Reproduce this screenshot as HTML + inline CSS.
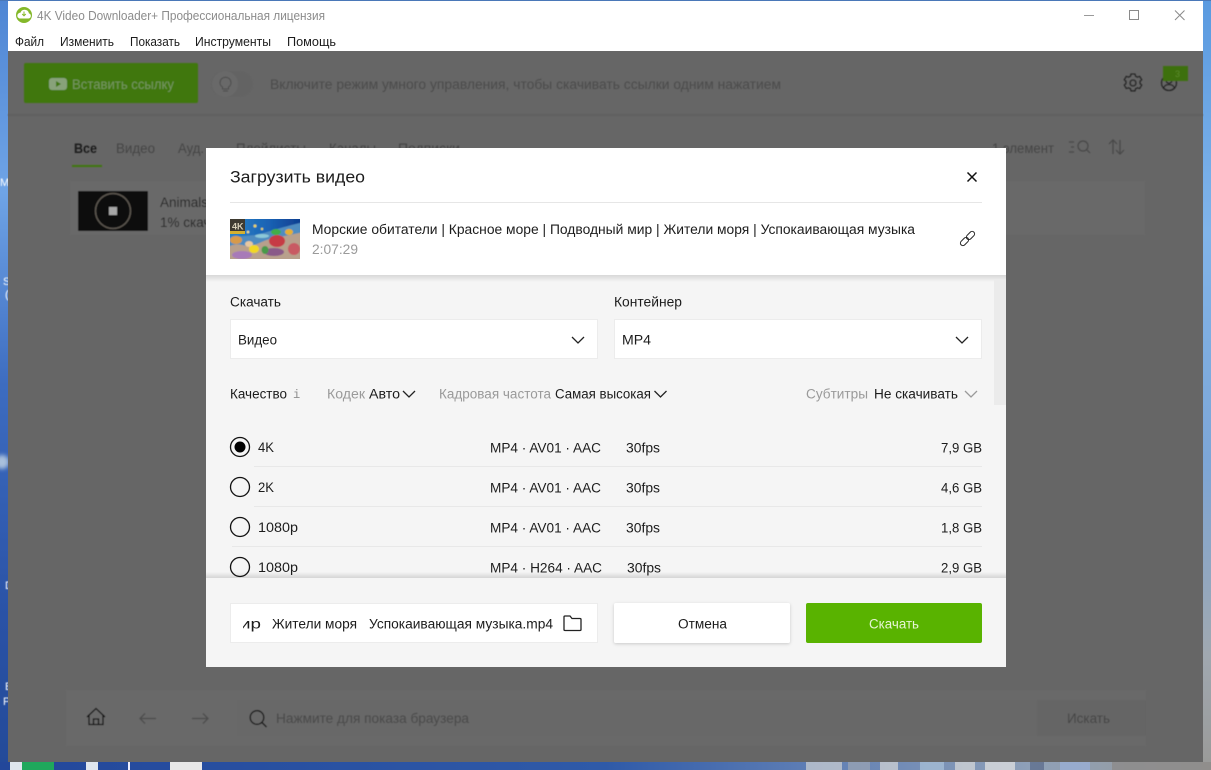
<!DOCTYPE html>
<html><head><meta charset="utf-8"><title>4K Video Downloader+</title>
<style>
html,body{margin:0;padding:0;width:1211px;height:770px;overflow:hidden;background:#666}
svg{display:block}
text{font-family:"Liberation Sans","Noto Sans CJK SC",sans-serif;font-size:13.5px;fill:#1c1c1c}
.s{font-size:12.5px}
.g{fill:#9a9a9a}
.d{fill:#454545}
</style></head><body>
<svg width="1211" height="770" viewBox="0 0 1211 770" xmlns="http://www.w3.org/2000/svg">
<defs>
<linearGradient id="lb" x1="0" y1="0" x2="0" y2="1"><stop offset="0" stop-color="#4f86d4"/><stop offset=".25" stop-color="#6fa4e6"/><stop offset=".5" stop-color="#3d6cc0"/><stop offset=".8" stop-color="#2a52a6"/><stop offset="1" stop-color="#234a98"/></linearGradient>
<linearGradient id="rb" x1="0" y1="0" x2="0" y2="1"><stop offset="0" stop-color="#5a9ae0"/><stop offset=".3" stop-color="#80b4ea"/><stop offset=".6" stop-color="#7da6d6"/><stop offset=".85" stop-color="#a0a8b0"/><stop offset="1" stop-color="#9a9a98"/></linearGradient>
<linearGradient id="bb" x1="0" y1="0" x2="1" y2="0"><stop offset="0" stop-color="#23479a"/><stop offset=".5" stop-color="#2f5aa8"/><stop offset=".66" stop-color="#5c7cb4"/><stop offset=".85" stop-color="#8ea0b8"/><stop offset="1" stop-color="#9a9a98"/></linearGradient>
<linearGradient id="sea" x1="0" y1="0" x2="1" y2="0"><stop offset="0" stop-color="#2a86c8"/><stop offset=".55" stop-color="#1a62b4"/><stop offset="1" stop-color="#0e3a8c"/></linearGradient>
<linearGradient id="sh1" x1="0" y1="0" x2="0" y2="1"><stop offset="0" stop-color="#000" stop-opacity=".12"/><stop offset="1" stop-color="#000" stop-opacity="0"/></linearGradient>
<linearGradient id="sh2" x1="0" y1="1" x2="0" y2="0"><stop offset="0" stop-color="#000" stop-opacity=".13"/><stop offset="1" stop-color="#000" stop-opacity="0"/></linearGradient>
<filter id="soft" x="-5%" y="-5%" width="110%" height="110%"><feGaussianBlur stdDeviation=".45"/></filter>
<filter id="blur2" x="-30%" y="-30%" width="160%" height="160%"><feGaussianBlur stdDeviation="2"/></filter>
<filter id="tb" x="-5%" y="-5%" width="110%" height="110%"><feGaussianBlur stdDeviation=".5"/></filter>
<filter id="bs" x="-10%" y="-20%" width="120%" height="140%"><feDropShadow dx="0" dy="1" stdDeviation="1.5" flood-color="#000" flood-opacity=".18"/></filter>
<clipPath id="thumb"><rect x="230" y="219" width="70" height="40"/></clipPath>
<clipPath id="fn"><rect x="243" y="610" width="320" height="26"/></clipPath>
</defs>

<!-- desktop -->
<rect width="1211" height="770" fill="#2f5aa8"/>
<rect x="0" y="0" width="8" height="770" fill="url(#lb)"/>
<rect x="1203" y="0" width="8" height="770" fill="url(#rb)"/>
<rect x="0" y="762" width="1211" height="8" fill="url(#bb)"/>
<rect x="0" y="0" width="1211" height="1" fill="#4a78b8"/>
<rect x="10" y="762" width="12" height="8" fill="#dfe6ee"/>
<rect x="22" y="762" width="32" height="8" fill="#1fa85c"/>
<rect x="86" y="762" width="12" height="8" fill="#dfe6ee"/>
<rect x="128" y="762" width="2" height="8" fill="#eef"/>
<rect x="170" y="762" width="32" height="8" fill="#e8e8e8"/>
<g opacity=".75">
<rect x="806" y="762" width="36" height="8" fill="#c8ccd0"/>
<rect x="848" y="762" width="22" height="8" fill="#9aa4b4"/>
<rect x="880" y="762" width="18" height="8" fill="#d0d2d4"/>
<rect x="920" y="762" width="24" height="8" fill="#a8c0d8"/>
<rect x="955" y="762" width="20" height="8" fill="#d4d6d8"/>
<rect x="985" y="762" width="30" height="8" fill="#e0e0e0"/>
<rect x="1030" y="762" width="14" height="8" fill="#5c6c8c"/>
<rect x="1060" y="762" width="30" height="8" fill="#9ab0d8"/>
<rect x="1112" y="762" width="99" height="8" fill="#8c8a88"/>
</g>
<g filter="url(#soft)">
<text x="0" y="186" style="fill:#fff;font-size:11px">M</text>
<text x="3" y="285" style="fill:#fff;font-size:11px">S</text>
<text x="5" y="298" style="fill:#fff;font-size:11px">(</text>
<text x="5" y="589" style="fill:#fff;font-size:11px">D</text>
<text x="5" y="690" style="fill:#fff;font-size:11px">E</text>
<text x="3" y="705" style="fill:#fff;font-size:11px">P</text>
</g>
<ellipse cx="2" cy="462" rx="7" ry="7" fill="#a8c0dc" filter="url(#blur2)"/>

<!-- window -->
<rect x="8" y="1" width="1195" height="50" fill="#fff"/>
<rect x="8" y="51" width="1195" height="711" fill="#666"/>

<!-- title bar -->
<circle cx="24" cy="15" r="8" fill="#84b82a"/>
<path d="M19.500 18.500h9a2.600 2.600 0 0 0 .4-5.100 4.400 4.400 0 0 0-8.500-.6 2.900 2.900 0 0 0-.9 5.700z" fill="#fff"/>
<path d="M24 11.500v4M22.200 14l1.800 1.800 1.800-1.800" stroke="#84b82a" stroke-width="1" fill="none"/>
<text x="37" y="20" class="s" style="fill:#8c8c8c" textLength="288" lengthAdjust="spacingAndGlyphs">4K Video Downloader+ Профессиональная лицензия</text>
<text x="15" y="46" class="s" textLength="29" lengthAdjust="spacingAndGlyphs">Файл</text>
<text x="60" y="46" class="s" textLength="54" lengthAdjust="spacingAndGlyphs">Изменить</text>
<text x="130" y="46" class="s" textLength="50" lengthAdjust="spacingAndGlyphs">Показать</text>
<text x="195" y="46" class="s" textLength="76" lengthAdjust="spacingAndGlyphs">Инструменты</text>
<text x="287" y="46" class="s" textLength="49" lengthAdjust="spacingAndGlyphs">Помощь</text>
<rect x="1084" y="15" width="10" height="1" fill="#9a9a9a"/>
<rect x="1129.500" y="10.500" width="9" height="9" fill="none" stroke="#8a8a8a"/>
<path d="M1175 10.500l9.500 9.500M1184.500 10.500l-9.500 9.500" stroke="#8a8a8a" stroke-width="1" fill="none"/>

<!-- dim app -->
<g filter="url(#soft)">
<rect x="8" y="114" width="1195" height="2" fill="#606060"/>
<rect x="24" y="63" width="174" height="40" rx="2" fill="#3f770c"/>
<rect x="49" y="78" width="18" height="12" rx="3" fill="#88a27a"/>
<path d="M56 81l5 3-5 3z" fill="#3f770c"/>
<text x="72" y="89" style="fill:#76965f" textLength="102" lengthAdjust="spacingAndGlyphs">Вставить ссылку</text>
<rect x="211" y="71" width="42" height="26" rx="13" fill="#636363"/>
<circle cx="225" cy="84" r="13" fill="#696969"/>
<path d="M222.500 89v-2c-1.500-1-2.500-2.500-2.500-4.300a5.500 5.500 0 0 1 11 0c0 1.800-1 3.300-2.500 4.300v2zM223 91h5" fill="none" stroke="#4c4c4c"/>
<text x="270" y="89" style="fill:#4b4b4b" textLength="511" lengthAdjust="spacingAndGlyphs">Включите режим умного управления, чтобы скачивать ссылки одним нажатием</text>

<!-- top right -->
<g fill="none" stroke="#1e1e1e" stroke-width="1.100">
<circle cx="1133" cy="83" r="3"/>
<path d="M1131 75.500h4l.6 2.200 1.900.9 2.200-.7 2 3.400-1.700 1.600v2.100l1.700 1.600-2 3.400-2.200-.7-1.900.9-.6 2.200h-4l-.6-2.200-1.900-.9-2.200.7-2-3.400 1.700-1.600v-2.100l-1.700-1.600 2-3.400 2.200.7 1.900-.9z" transform="translate(0 -1.500)"/>
<circle cx="1169" cy="83" r="7.500"/>
<circle cx="1169" cy="80.500" r="2.800"/>
<path d="M1163.500 88c1-2.500 3-3.500 5.500-3.500s4.500 1 5.500 3.500"/>
</g>
<rect x="1163" y="66" width="25" height="15" fill="#3c6f0a"/>
<text x="1175" y="77" style="fill:#5a8a2c;font-size:9px">3</text>

<!-- tabs -->
<text x="74" y="153" style="fill:#1a1a1a;font-weight:bold" textLength="23" lengthAdjust="spacingAndGlyphs">Все</text>
<rect x="72" y="165" width="30" height="2" fill="#3f770c"/>
<text x="116" y="153" class="d" textLength="39" lengthAdjust="spacingAndGlyphs">Видео</text>
<text x="178" y="153" class="d" textLength="26" lengthAdjust="spacingAndGlyphs">Ауд.</text>
<text x="236" y="153" class="d" textLength="70" lengthAdjust="spacingAndGlyphs">Плейлисты</text>
<text x="329" y="153" class="d" textLength="47" lengthAdjust="spacingAndGlyphs">Каналы</text>
<text x="398" y="153" class="d" textLength="62" lengthAdjust="spacingAndGlyphs">Подписки</text>
<text x="992" y="153" class="d" textLength="62" lengthAdjust="spacingAndGlyphs">1 элемент</text>
<g fill="none" stroke="#474747" stroke-width="1.200">
<path d="M1069 142h5M1071 147h3M1069 152h5"/>
<circle cx="1083" cy="146" r="5"/><path d="M1086.500 149.500l3.500 3.500"/>
<path d="M1113 154v-14M1109 144l4-4 4 4M1120 140v14M1116 150l4 4 4-4"/>
</g>

<!-- list item -->
<rect x="70" y="181" width="1075" height="54" fill="#696969"/>
<rect x="78" y="191" width="70" height="40" rx="1" fill="#100f0d"/>
<circle cx="113" cy="211" r="17.500" fill="none" stroke="#5c5750" stroke-width="1.500"/>
<rect x="109" y="207" width="8" height="8" fill="#a7a7a7"/>
<text x="160" y="207" style="fill:#262626">Animals of Africa</text>
<text x="160" y="227" style="fill:#262626">1% скачано</text>

<!-- bottom bar -->
<rect x="66" y="690" width="1080" height="56" fill="#696969"/>
<rect x="237" y="700" width="800" height="36" fill="#676767"/>
<rect x="1037" y="700" width="109" height="36" fill="#656565"/>
<g fill="none" stroke-width="1.300">
<path d="M87 717l9-8.500 9 8.500M89 714.500v10h14v-10M93.500 724.500v-5.500h5v5.500" stroke="#111"/>
<path d="M140 718.500h16M145 713.500l-5 5 5 5" stroke="#4c4c4c"/>
<path d="M192 718.500h16M203 713.500l5 5-5 5" stroke="#4c4c4c"/>
<circle cx="257" cy="717.500" r="6.800" stroke="#111"/><path d="M262 722.500l4.500 4.500" stroke="#111"/>
</g>
<text x="276" y="723" style="fill:#484848" textLength="193" lengthAdjust="spacingAndGlyphs">Нажмите для показа браузера</text>
<text x="1067" y="723" style="fill:#454545" textLength="43" lengthAdjust="spacingAndGlyphs">Искать</text>
</g>

<!-- modal -->
<rect x="206" y="148" width="800" height="519" fill="#f5f5f5"/>
<rect x="206" y="148" width="800" height="127" fill="#fff"/>
<rect x="206" y="275" width="800" height="7" fill="url(#sh1)"/>
<text x="230" y="182.500" style="font-size:17px" textLength="135" lengthAdjust="spacingAndGlyphs">Загрузить видео</text>
<path d="M967.500 172.500l9 9M976.500 172.500l-9 9" stroke="#111" stroke-width="1.500" fill="none"/>
<rect x="230" y="202" width="752" height="1" fill="#e6e6e6"/>

<!-- thumbnail -->
<g clip-path="url(#thumb)">
<g filter="url(#tb)">
<rect x="226" y="215" width="78" height="48" fill="url(#sea)"/>
<path d="M226 240c10-4 20-4 30-5 12-3 26-8 48-13v40h-78z" fill="#4f8cc0"/>
<path d="M226 248c8-5 14-4 20-2 8 1 16-5 24-7l34-7v30h-78z" fill="#b8a08c"/>
<ellipse cx="236" cy="240" rx="6" ry="4" fill="#d89a48"/>
<ellipse cx="249" cy="244" rx="4" ry="3" fill="#e8c8a0"/>
<ellipse cx="277" cy="241" rx="8" ry="6" fill="#c63a44"/>
<ellipse cx="254" cy="249" rx="5" ry="4" fill="#f2d820"/>
<ellipse cx="274" cy="252" rx="10" ry="4" fill="#8a5a88"/>
<ellipse cx="276" cy="232" rx="5" ry="3" fill="#3fae4a"/>
<ellipse cx="289" cy="232" rx="4" ry="3" fill="#e6b030"/>
<ellipse cx="242" cy="255" rx="10" ry="4" fill="#a87ab8"/>
<ellipse cx="265" cy="250" rx="3.500" ry="4" fill="#4a9a4a"/>
<ellipse cx="294" cy="249" rx="6" ry="6" fill="#c85a64"/>
<ellipse cx="262" cy="236" rx="7" ry="2" fill="#8cc8d8"/>
<circle cx="255" cy="226" r="1.500" fill="#e8d860"/><circle cx="262" cy="229" r="1.200" fill="#e8d860"/><circle cx="248" cy="232" r="1.300" fill="#f0e090"/>
</g>
<rect x="230" y="219" width="15" height="15" fill="#3e3a30"/>
<rect x="230" y="231" width="15" height="3" fill="#d4b030"/>
<text x="232" y="229.500" style="fill:#d8d0b8;font-size:9px;font-weight:bold">4K</text>
</g>

<text x="312" y="234" textLength="603" lengthAdjust="spacingAndGlyphs">Морские обитатели | Красное море | Подводный мир | Жители моря | Успокаивающая музыка</text>
<text x="312" y="254" class="g" textLength="46" lengthAdjust="spacingAndGlyphs">2:07:29</text>
<g fill="none" stroke="#222" stroke-width="1" transform="rotate(-45 967.500 238.500)">
<rect x="958.500" y="236" width="9.500" height="5" rx="2.500"/>
<rect x="967" y="236" width="9.500" height="5" rx="2.500"/>
</g>

<!-- rows -->
<text x="230" y="306.500" textLength="51" lengthAdjust="spacingAndGlyphs">Скачать</text>
<rect x="230.500" y="319.500" width="367" height="39" fill="#fff" stroke="#ececec"/>
<text x="238" y="344.500" textLength="39" lengthAdjust="spacingAndGlyphs">Видео</text>
<path d="M572 337l6 6 6-6" fill="none" stroke="#222" stroke-width="1.300"/>
<text x="614" y="306.500" textLength="68" lengthAdjust="spacingAndGlyphs">Контейнер</text>
<rect x="614.500" y="319.500" width="367" height="39" fill="#fff" stroke="#ececec"/>
<text x="622" y="344.500" textLength="29" lengthAdjust="spacingAndGlyphs">MP4</text>
<path d="M956 337l6 6 6-6" fill="none" stroke="#222" stroke-width="1.300"/>
<rect x="994" y="280" width="12" height="125" fill="#ebebeb"/>

<text x="230" y="398.500" textLength="57" lengthAdjust="spacingAndGlyphs">Качество</text>
<text x="293" y="398" style="fill:#8f8f8f;font-family:'Liberation Mono',monospace;font-size:12px">i</text>
<text x="327" y="398.500" class="g" textLength="38" lengthAdjust="spacingAndGlyphs">Кодек</text>
<text x="369" y="398.500" textLength="31" lengthAdjust="spacingAndGlyphs">Авто</text>
<path d="M403 391l6 6 6-6" fill="none" stroke="#222" stroke-width="1.300"/>
<text x="439" y="398.500" class="g" textLength="112" lengthAdjust="spacingAndGlyphs">Кадровая частота</text>
<text x="555" y="398.500" textLength="96" lengthAdjust="spacingAndGlyphs">Самая высокая</text>
<path d="M654.500 391l6 6 6-6" fill="none" stroke="#222" stroke-width="1.300"/>
<text x="806" y="398.500" class="g" textLength="62" lengthAdjust="spacingAndGlyphs">Субтитры</text>
<text x="874" y="398.500" textLength="84" lengthAdjust="spacingAndGlyphs">Не скачивать</text>
<path d="M965 391l6 6 6-6" fill="none" stroke="#9a9a9a" stroke-width="1.300"/>

<g fill="none" stroke="#111" stroke-width="1.300">
<circle cx="240" cy="447" r="9.500"/><circle cx="240" cy="487" r="9.500"/><circle cx="240" cy="527" r="9.500"/><circle cx="240" cy="567" r="9.500"/>
</g>
<circle cx="240" cy="447" r="5.500" fill="#000"/>
<rect x="254" y="466" width="728" height="1" fill="#e8e8e8"/>
<rect x="254" y="506" width="728" height="1" fill="#e8e8e8"/>
<rect x="232" y="546" width="750" height="1" fill="#e8e8e8"/>

<text x="258" y="452" textLength="16" lengthAdjust="spacingAndGlyphs">4K</text>
<text x="490" y="452.500" textLength="111" lengthAdjust="spacingAndGlyphs">MP4 · AV01 · AAC</text>
<text x="626" y="452.500" textLength="34" lengthAdjust="spacingAndGlyphs">30fps</text>
<text x="941" y="452.500" textLength="41" lengthAdjust="spacingAndGlyphs">7,9 GB</text>

<text x="258" y="492" textLength="16" lengthAdjust="spacingAndGlyphs">2K</text>
<text x="490" y="492.500" textLength="111" lengthAdjust="spacingAndGlyphs">MP4 · AV01 · AAC</text>
<text x="626" y="492.500" textLength="34" lengthAdjust="spacingAndGlyphs">30fps</text>
<text x="941" y="492.500" textLength="41" lengthAdjust="spacingAndGlyphs">4,6 GB</text>

<text x="258" y="532" textLength="40" lengthAdjust="spacingAndGlyphs">1080p</text>
<text x="490" y="532.500" textLength="111" lengthAdjust="spacingAndGlyphs">MP4 · AV01 · AAC</text>
<text x="626" y="532.500" textLength="34" lengthAdjust="spacingAndGlyphs">30fps</text>
<text x="941" y="532.500" textLength="41" lengthAdjust="spacingAndGlyphs">1,8 GB</text>

<text x="258" y="572" textLength="40" lengthAdjust="spacingAndGlyphs">1080p</text>
<text x="490" y="572.500" textLength="112" lengthAdjust="spacingAndGlyphs">MP4 · H264 · AAC</text>
<text x="627" y="572.500" textLength="34" lengthAdjust="spacingAndGlyphs">30fps</text>
<text x="941" y="572.500" textLength="41" lengthAdjust="spacingAndGlyphs">2,9 GB</text>

<!-- footer -->
<rect x="206" y="572" width="800" height="6" fill="url(#sh2)"/>
<rect x="206" y="578" width="800" height="89" fill="#f5f5f5"/>
<rect x="230.500" y="603.500" width="367" height="39" fill="#fff" stroke="#ececec"/>
<g clip-path="url(#fn)">
<text x="240" y="628.500" textLength="21" lengthAdjust="spacingAndGlyphs">ир</text>
<text x="272" y="628.500" textLength="85" lengthAdjust="spacingAndGlyphs">Жители моря</text>
<text x="369" y="628.500" textLength="184" lengthAdjust="spacingAndGlyphs">Успокаивающая музыка.mp4</text>
</g>
<path d="M564 617a1 1 0 0 1 1-1h5l2 2.500h8a1 1 0 0 1 1 1v10a1 1 0 0 1-1 1h-15a1 1 0 0 1-1-1z" fill="none" stroke="#222" stroke-width="1.300"/>
<rect x="614" y="603" width="176" height="40" rx="2" fill="#fff" filter="url(#bs)"/>
<text x="678" y="628.500" textLength="49" lengthAdjust="spacingAndGlyphs">Отмена</text>
<rect x="806" y="603" width="176" height="40" rx="2" fill="#59b300"/>
<text x="869" y="628.500" style="fill:#e6f5d4" textLength="50" lengthAdjust="spacingAndGlyphs">Скачать</text>
</svg>
</body></html>
